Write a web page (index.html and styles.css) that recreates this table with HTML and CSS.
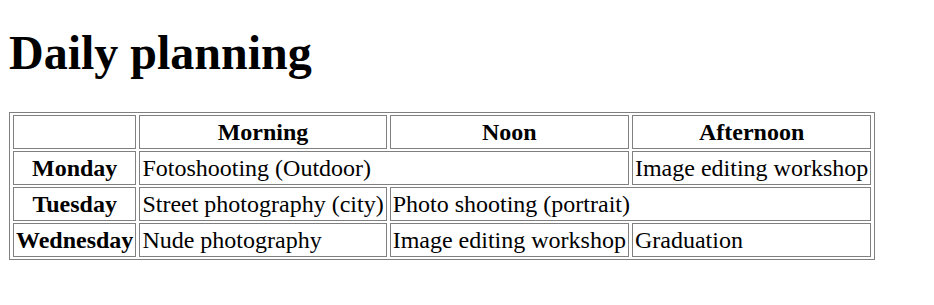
FILE: index.html
```html
<!DOCTYPE html>
<html>
<head>
<meta charset="utf-8">
<title>Daily planning</title>
<link rel="stylesheet" href="styles.css">
</head>
<body>
<h1 class="title">Daily planning</h1>
<table class="plan" border="1">
  <tr>
    <th></th>
    <th>Morning</th>
    <th>Noon</th>
    <th>Afternoon</th>
  </tr>
  <tr>
    <th>Monday</th>
    <td colspan="2">Fotoshooting (Outdoor)</td>
    <td>Image editing workshop</td>
  </tr>
  <tr>
    <th>Tuesday</th>
    <td>Street photography (city)</td>
    <td colspan="2">Photo shooting (portrait)</td>
  </tr>
  <tr>
    <th>Wednesday</th>
    <td>Nude photography</td>
    <td>Image editing workshop</td>
    <td>Graduation</td>
  </tr>
</table>
</body>
</html>
```
FILE: styles.css
```css
body {
  margin: 8px 8px 8px 9px;
  font-family: "Liberation Serif", "Times New Roman", serif;
  color: #000;
  background: #fff;
}
.title {
  font-size: 48px;
  font-weight: bold;
  margin: 17px 0 32px;
}
.plan {
  font-size: 24px;
  border: 1px solid #808080;
  border-spacing: 3px 2px;
}
.plan th,
.plan td {
  border: 1px solid #808080;
  padding: 1px 2px;
  height: 30px;
}
.plan td {
  text-align: left;
}
```
